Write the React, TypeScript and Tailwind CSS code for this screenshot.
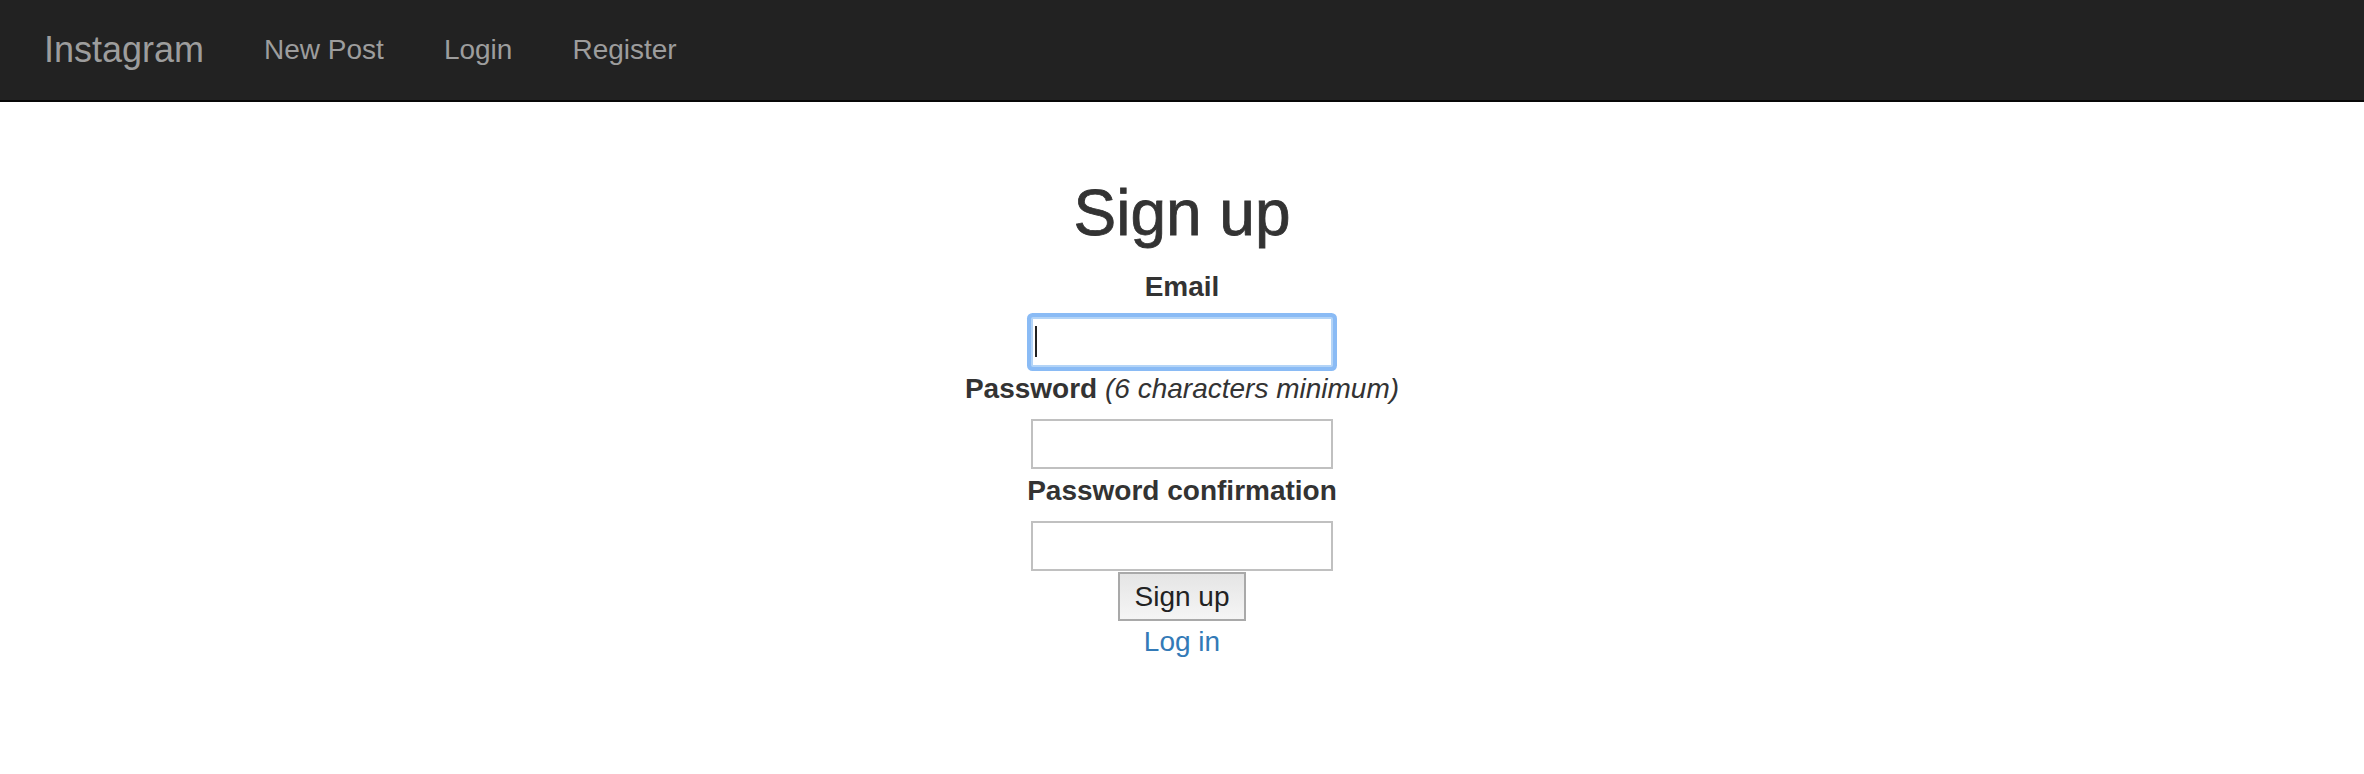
import React from "react";

const font = { fontFamily: '"Liberation Sans", Arial, sans-serif' };

function Field({ label, hint, focused }: { label: string; hint?: string; focused?: boolean }) {
  return (
    <div className="flex flex-col items-center mt-[2px]">
      <label className="text-[28px] leading-[40px] font-bold text-[#333] mb-[10px]">
        {label}
        {hint && <span className="font-normal italic"> {hint}</span>}
      </label>
      <div className="relative">
        <input
          type={label === "Email" ? "email" : "password"}
          className={
            focused
              ? "block w-[302px] h-[50px] bg-white border-2 border-[#b3d4f7] rounded-[2px] outline-none shadow-[0_0_0_4px_#8abbf5]"
              : "block w-[302px] h-[50px] bg-white border-2 border-[#c0c0c0] outline-none"
          }
        />
        {/* caret */}
        {focused && <span className="absolute left-[4px] top-[9px] w-[2px] h-[31px] bg-[#222]" />}
      </div>
    </div>
  );
}

export default function App() {
  return (
    <div className="w-full min-h-[774px] bg-white" style={font}>
      <nav className="h-[102px] bg-[#222] border-b-2 border-[#080808] flex items-center pl-[14px]">
        <a href="#" className="px-[30px] text-[36px] leading-[40px] text-[#9d9d9d]">
          Instagram
        </a>
        <ul className="flex">
          <li>
            <a href="#" className="block px-[30px] text-[28px] leading-[40px] text-[#9d9d9d]">New Post</a>
          </li>
          <li>
            <a href="#" className="block px-[30px] text-[28px] leading-[40px] text-[#9d9d9d]">Login</a>
          </li>
          <li>
            <a href="#" className="block px-[30px] text-[28px] leading-[40px] text-[#9d9d9d]">Register</a>
          </li>
        </ul>
      </nav>

      <div className="flex flex-col items-center text-center">
        <h1 className="mt-[76px] mb-[17px] text-[64px] leading-[70px] text-[#333] [-webkit-text-stroke:0.8px_#333]">
          Sign up
        </h1>

        <Field label="Email" focused />
        <Field label="Password" hint="(6 characters minimum)" />
        <Field label="Password confirmation" />

        <button className="mt-[1px] w-[128px] h-[49px] border-2 border-[#a9a9a9] bg-gradient-to-b from-[#e5e5e5] to-[#f5f5f5] text-[28px] leading-[40px] text-[#222]">
          Sign up
        </button>
        <a href="#" className="mt-[1px] text-[28px] leading-[40px] text-[#337ab7]">
          Log in
        </a>
      </div>
    </div>
  );
}
